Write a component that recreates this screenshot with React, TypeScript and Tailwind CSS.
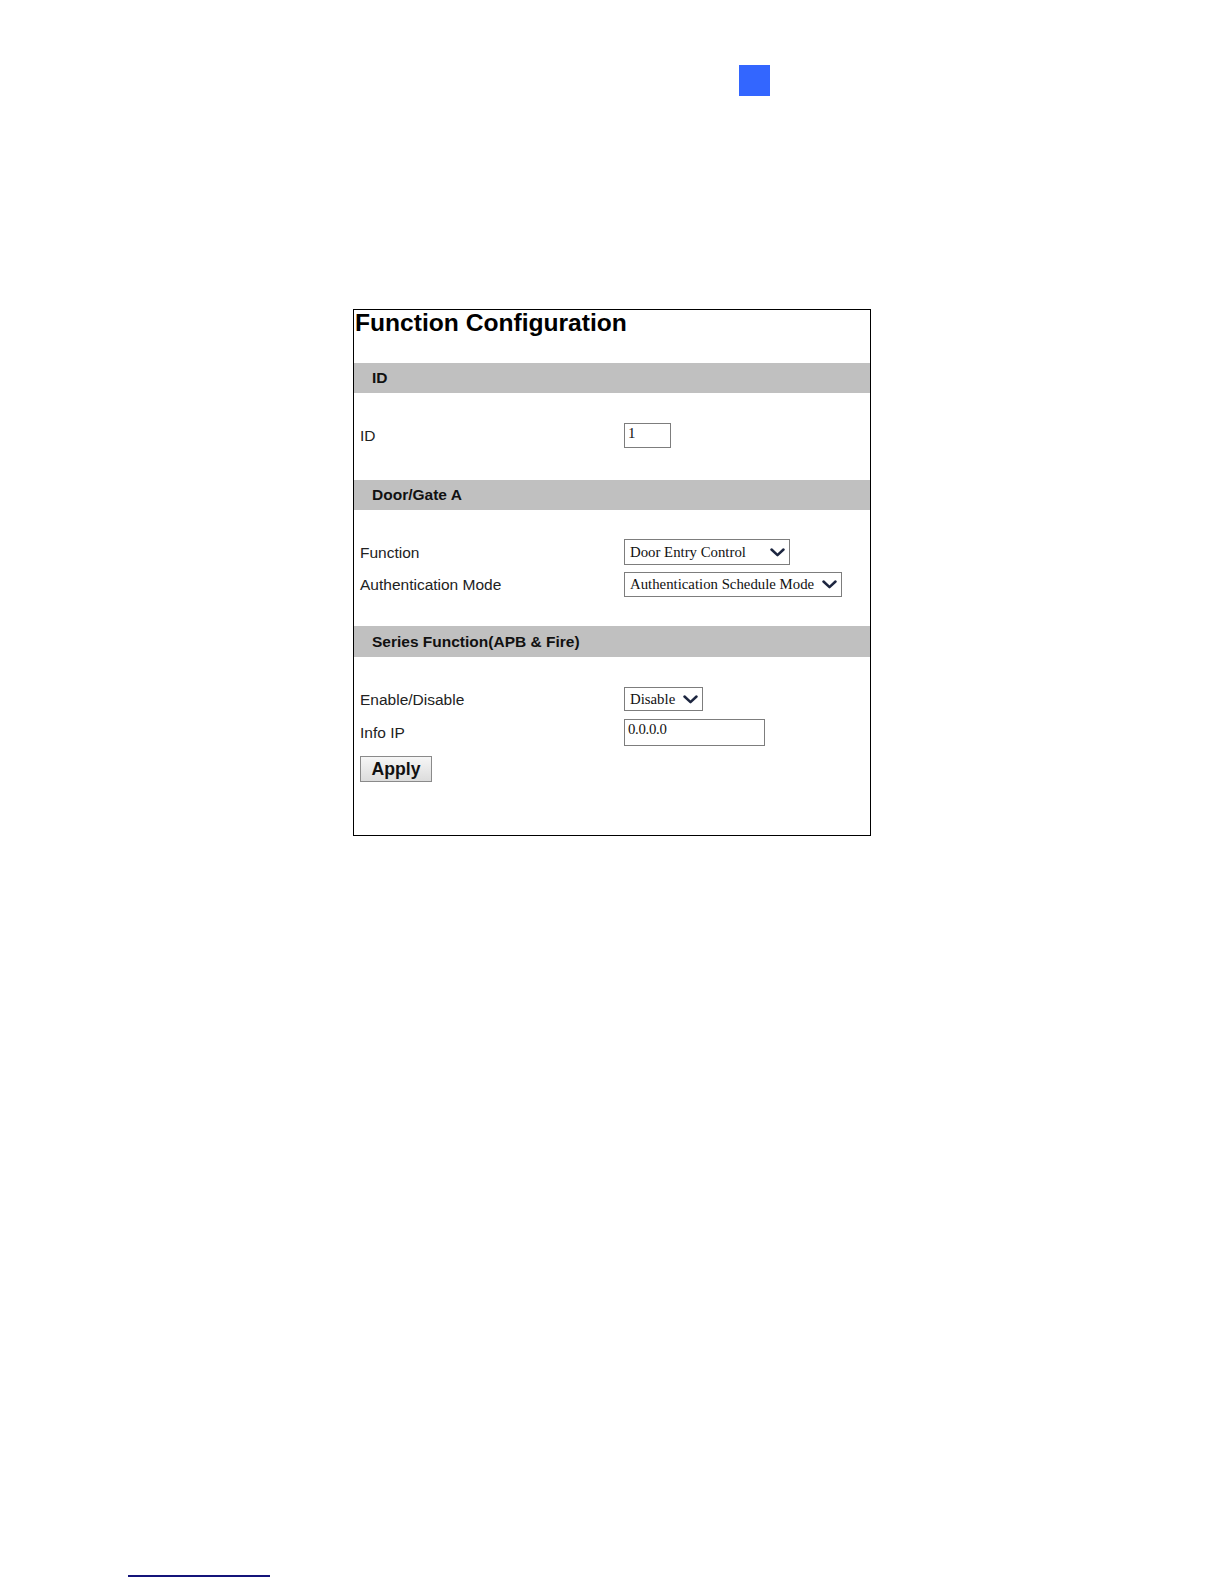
const sans = "font-['Liberation_Sans',Arial,sans-serif]"
const serif = "font-['Liberation_Serif','Times_New_Roman',serif]"

function Chevron() {
  return (
    <svg width="15" height="9" viewBox="0 0 15 9" className="shrink-0">
      <path d="M1.5 1.5 L7.5 7.2 L13.5 1.5" fill="none" stroke="#1d2640" strokeWidth="2.5" strokeLinecap="round" strokeLinejoin="round" />
    </svg>
  )
}

function SectionHeader({ title }: { title: string }) {
  return (
    <div className="h-[30.5px] bg-[#c0c0c0] flex items-center pl-[18px]">
      <span className="text-[15.5px] font-bold text-[#111]">{title}</span>
    </div>
  )
}

function Row({ label, children }: { label: string; children: React.ReactNode }) {
  return (
    <div className="flex items-center">
      <div className="w-[270px] pl-[6px] text-[15.5px] text-[#222]">{label}</div>
      {children}
    </div>
  )
}

function Select({ value, width, height = 'h-[25.4px]' }: { value: string; width: string; height?: string }) {
  return (
    <div className={`${width} ${height} border border-[#7d7d7d] bg-white flex items-center justify-between pl-[5px] pr-[4px]`}>
      <span className={`${serif} text-[14.8px] text-[#111] leading-none`}>{value}</span>
      <Chevron />
    </div>
  )
}

function Input({ value, width, height = 'h-[25.4px]' }: { value: string; width: string; height?: string }) {
  return (
    <div className={`${width} ${height} border border-[#7d7d7d] bg-white flex items-start pl-[3px] pt-[2px]`}>
      <span className={`${serif} text-[14.8px] text-[#111] leading-none tracking-[-0.3px]`}>{value}</span>
    </div>
  )
}

export default function App() {
  return (
    <div className={`${sans} w-[1224px] h-[1584px] bg-white flex flex-col`}>
      {/* page marker */}
      <div className="ml-[739px] mt-[65px] w-[31px] h-[31px] bg-[#3366ff]" />

      {/* screenshot panel */}
      <div className="ml-[353px] mt-[213px] w-[518px] h-[527px] border border-black flex flex-col">
        <div className="h-[52.5px] pl-[1px]">
          <h1 className="text-[24.6px] font-bold text-black leading-[25px]">Function Configuration</h1>
        </div>

        <SectionHeader title="ID" />
        <div className="pt-[30px] pb-[31.3px]">
          <Row label="ID">
            <Input value="1" width="w-[46.5px]" />
          </Row>
        </div>

        <SectionHeader title="Door/Gate A" />
        <div className="pt-[29.3px] pb-[29px] flex flex-col gap-[7px]">
          <Row label="Function">
            <Select value="Door Entry Control" width="w-[166px]" />
          </Row>
          <Row label="Authentication Mode">
            <Select value="Authentication Schedule Mode" width="w-[218px]" />
          </Row>
        </div>

        <SectionHeader title="Series Function(APB & Fire)" />
        <div className="pt-[30.3px] flex flex-col">
          <Row label="Enable/Disable">
            <Select value="Disable" width="w-[79px]" height="h-[24.4px]" />
          </Row>
          <div className="mt-[8px]">
            <Row label="Info IP">
              <Input value="0.0.0.0" width="w-[140.5px]" height="h-[26.4px]" />
            </Row>
          </div>
          <div className="mt-[10px] pl-[6px]">
            <button className="w-[72px] h-[26.2px] border border-[#8a8a8a] bg-gradient-to-b from-[#f6f6f6] to-[#dcdcdc] text-[17.6px] font-bold text-[#111] flex items-center justify-center">
              Apply
            </button>
          </div>
        </div>
      </div>

      {/* footnote rule */}
      <div className="ml-[128px] mt-[739px] w-[142px] h-[1.5px] bg-[#14147a]" />
    </div>
  )
}
